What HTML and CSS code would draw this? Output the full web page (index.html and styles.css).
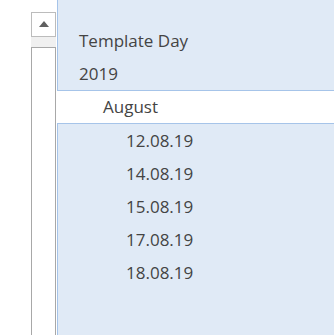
FILE: index.html
```html
<!DOCTYPE html>
<html lang="en">
<head>
    <meta charset="UTF-8">
    <title>Template Day</title>
    <link rel="stylesheet" href="styles.css">
</head>
<body>
    <div class="page">
        <div class="scrollbar">
            <div class="scroll-up">
                <span class="arrow-up"></span>
            </div>
            <div class="scroll-gap"></div>
            <div class="scroll-thumb"></div>
        </div>

        <div class="tree">
            <div class="tree-group tree-group-top">
                <div class="tree-item level-0">Template Day</div>
                <div class="tree-item level-0">2019</div>
            </div>
            <div class="tree-item level-1 selected">August</div>
            <div class="tree-group tree-group-bottom">
                <div class="tree-item level-2">12.08.19</div>
                <div class="tree-item level-2">14.08.19</div>
                <div class="tree-item level-2">15.08.19</div>
                <div class="tree-item level-2">17.08.19</div>
                <div class="tree-item level-2">18.08.19</div>
            </div>
        </div>
    </div>
</body>
</html>
```

FILE: styles.css
```css
* {
    margin: 0;
    padding: 0;
    box-sizing: border-box;
}

body {
    background-color: #ffffff;
    font-family: "Open Sans", "Liberation Sans", sans-serif;
    overflow: hidden;
}

.page {
    display: flex;
    height: 335px;
}

/* scrollbar on the left */
.scrollbar {
    width: 25px;
    margin-left: 31px;
    margin-right: 1px;
    padding-top: 12px;
    display: flex;
    flex-direction: column;
}

.scroll-up {
    height: 25px;
    border: 1px solid #bcbcbc;
    background-color: #ffffff;
    display: flex;
    align-items: center;
    justify-content: center;
}

.arrow-up {
    width: 0;
    height: 0;
    border-left: 5.5px solid transparent;
    border-right: 5.5px solid transparent;
    border-bottom: 6px solid #606060;
    margin-top: -1px;
}

.scroll-gap {
    height: 10px;
    background-color: #f0f0f0;
}

.scroll-thumb {
    flex: 1;
    border: 1px solid #a8a8a8;
    border-bottom: none;
    background-color: #ffffff;
}

/* tree */
.tree {
    flex: 1;
    display: flex;
    flex-direction: column;
}

.tree-group {
    background-color: #e0eaf6;
    border-left: 1px solid #a6c4e9;
}

.tree-group-top {
    padding-top: 24px;
    border-bottom: 1px solid #a6c4e9;
}

.tree-group-bottom {
    flex: 1;
    border-top: 1px solid #a6c4e9;
}

.tree-item {
    height: 33px;
    line-height: 33px;
    font-size: 17px;
    color: #444444;
    white-space: nowrap;
}

.tree-item.selected {
    height: 32px;
    line-height: 32px;
    background-color: #ffffff;
}

.level-0 {
    padding-left: 21px;
}

.level-1 {
    padding-left: 46px;
}

.level-2 {
    padding-left: 68px;
}
```
